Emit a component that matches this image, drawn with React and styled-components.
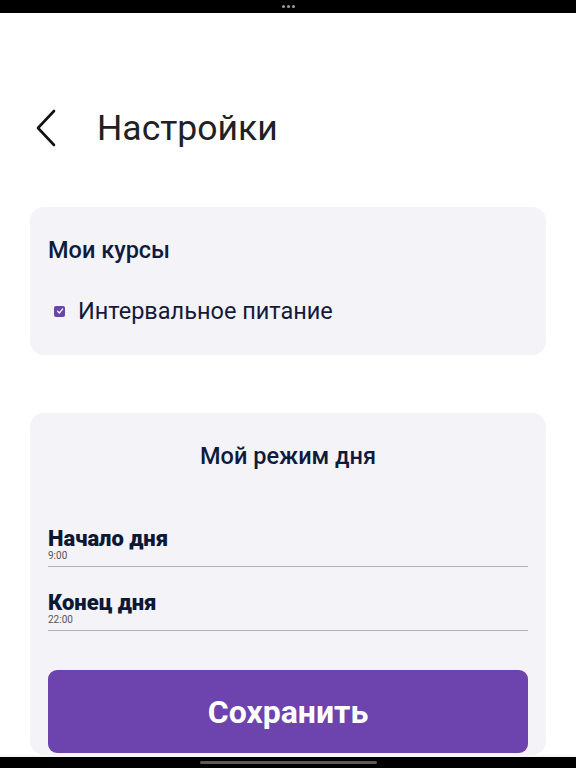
import React, { useState } from "react";
import styled, { createGlobalStyle } from "styled-components";

const Global = createGlobalStyle`
  html, body { margin: 0; padding: 0; background: #ffffff; }
  body { font-family: Roboto, "Noto Sans", "Liberation Sans", sans-serif; }
  * { box-sizing: border-box; }
`;

const Screen = styled.div`
  width: 576px;
  height: 768px;
  display: flex;
  flex-direction: column;
  overflow: hidden;
  background: #ffffff;
`;

const StatusBar = styled.div`
  height: 13px;
  flex: none;
  background: #000;
  display: flex;
  align-items: center;
  justify-content: center;
  gap: 2px;
`;

const Dot = styled.span`
  width: 3px;
  height: 3px;
  border-radius: 50%;
  background: #9a9a9a;
`;

const Content = styled.main`
  flex: 1;
  min-height: 0;
  padding: 95px 30px 0;
  display: flex;
  flex-direction: column;
  overflow: hidden;
`;

const Header = styled.header`
  display: flex;
  align-items: center;
  height: 40px;
  padding-left: 6px;
`;

const BackButton = styled.button`
  width: 20px;
  height: 40px;
  padding: 0;
  border: none;
  background: none;
  display: flex;
  align-items: center;
  justify-content: flex-start;
  cursor: pointer;
`;

const Title = styled.h1`
  margin: 0 0 0 41px;
  font-size: 35.5px;
  line-height: 40px;
  font-weight: 400;
  color: #202124;
`;

const Card = styled.section`
  background: #f4f3f7;
  border-radius: 14px;
  padding: ${(p) => p.$pad};
  margin-top: ${(p) => p.$mt}px;
  display: flex;
  flex-direction: column;
  flex: ${(p) => (p.$grow ? 1 : "none")};
`;

const CardTitle = styled.h2`
  margin: 0;
  font-size: 23.5px;
  line-height: 28px;
  font-weight: 500;
  color: #0f1a3c;
  text-align: ${(p) => p.$align || "left"};
`;

const CheckRow = styled.label`
  display: flex;
  align-items: center;
  margin-top: 33px;
  padding-left: 6px;
  gap: 13px;
  cursor: pointer;
`;

const Box = styled.span`
  width: 11px;
  height: 11px;
  border-radius: 2px;
  background: #6c45a9;
  display: flex;
  align-items: center;
  justify-content: center;
`;

const CheckText = styled.span`
  font-size: 23.5px;
  line-height: 28px;
  font-weight: 400;
  color: #131a3a;
`;

const Field = styled.div`
  border-bottom: 1px solid #b4b4b8;
  padding-bottom: ${(p) => p.$pb}px;
  margin-top: ${(p) => p.$mt}px;
  display: flex;
  flex-direction: column;
`;

const FieldLabel = styled.div`
  font-size: 22px;
  line-height: 23px;
  font-weight: 900;
  color: #0c1836;
`;

const FieldValue = styled.div`
  font-size: 10px;
  line-height: 11px;
  color: #555;
`;

const SaveButton = styled.button`
  margin-top: 39px;
  height: 83px;
  border: none;
  border-radius: 9px;
  background: #6d43ad;
  color: #ffffff;
  font-family: Roboto, "Noto Sans", sans-serif;
  font-size: 32px;
  font-weight: 700;
  cursor: pointer;
  flex: none;
`;

const HomeBar = styled.div`
  height: 13px;
  flex: none;
  background: #000;
  display: flex;
  align-items: center;
  justify-content: center;
  border-top: 2px solid #f6f5f8;
`;

const Indicator = styled.span`
  width: 177px;
  height: 3px;
  border-radius: 2px;
  background: #5a5a5a;
`;

export default function App() {
  const [checked] = useState(true);
  return (
    <>
      <Global />
      <Screen>
        <StatusBar>
          <Dot />
          <Dot />
          <Dot />
        </StatusBar>
        <Content>
          <Header>
            <BackButton aria-label="Назад">
              <svg width="20" height="38" viewBox="0 0 20 38" fill="none">
                <path d="M18 2 L2 19 L18 36" stroke="#111" strokeWidth="2.6" strokeLinecap="round" strokeLinejoin="round" />
              </svg>
            </BackButton>
            <Title>Настройки</Title>
          </Header>

          <Card $mt={59} $pad="29px 18px 30px">
            <CardTitle>Мои курсы</CardTitle>
            <CheckRow>
              <Box>
                {checked && (
                  <svg width="8" height="8" viewBox="0 0 8 8" fill="none">
                    <path d="M1.5 4.2 L3.3 6 L6.6 2" stroke="#fff" strokeWidth="1.2" strokeLinecap="round" strokeLinejoin="round" />
                  </svg>
                )}
              </Box>
              <CheckText>Интервальное питание</CheckText>
            </CheckRow>
          </Card>

          <Card $mt={58} $pad="29px 18px 0" $grow>
            <CardTitle $align="center">Мой режим дня</CardTitle>
            <Field $mt={57} $pb={5}>
              <FieldLabel>Начало дня</FieldLabel>
              <FieldValue>9:00</FieldValue>
            </Field>
            <Field $mt={24} $pb={5}>
              <FieldLabel>Конец дня</FieldLabel>
              <FieldValue>22:00</FieldValue>
            </Field>
            <SaveButton>Сохранить</SaveButton>
          </Card>
        </Content>
        <HomeBar>
          <Indicator />
        </HomeBar>
      </Screen>
    </>
  );
}
